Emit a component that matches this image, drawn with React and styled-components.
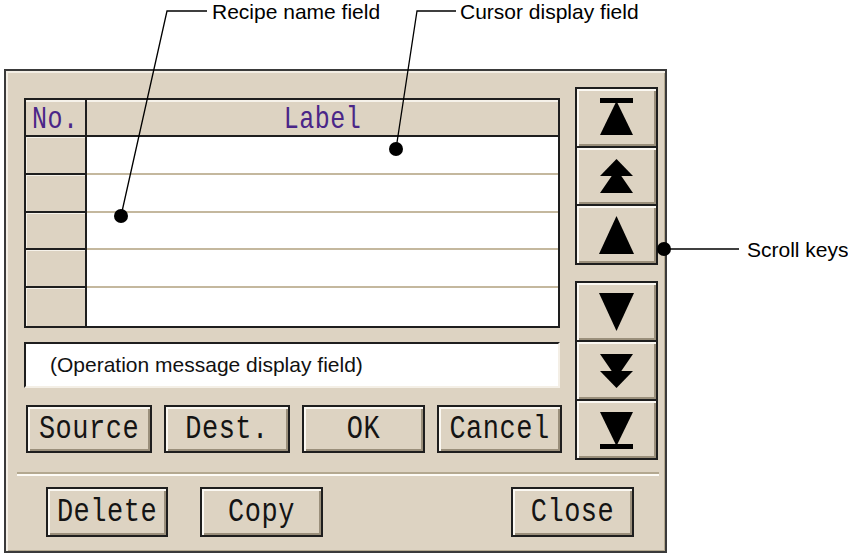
import React from 'react';
import styled, { createGlobalStyle } from 'styled-components';

//* ======================
//*     THEME VALUES
//* ======================
const BEIGE = '#ddd3c2';
const INK = '#1e1e1e';
const PIXEL_FONT = '"Liberation Mono", "DejaVu Sans Mono", monospace';

const GlobalStyle = createGlobalStyle`
  html, body {
    margin: 0;
    padding: 0;
    background: #fff;
  }
  body {
    font-family: "Liberation Sans", Arial, sans-serif;
  }
`;

//* ======================
//*     STYLED_COMPONENT
//* ======================
const Stage = styled.div`
  position: relative;
  width: 848px;
  height: 555px;
  overflow: hidden;
  box-sizing: border-box;
  padding: 69px 0 0 4px;
`;

const Leaders = styled.svg`
  position: absolute;
  left: 0;
  top: 0;
  pointer-events: none;
`;

const Callout = styled.span`
  position: absolute;
  left: ${(p) => p.$x}px;
  top: ${(p) => p.$y}px;
  font-family: "Liberation Sans", Arial, sans-serif;
  font-size: 21px;
  line-height: 24px;
  color: #000;
  white-space: nowrap;
`;

const Panel = styled.div`
  width: 663px;
  height: 484px;
  box-sizing: border-box;
  background: ${BEIGE};
  border: 2px solid #3a3a3a;
  box-shadow: inset 2px 2px 0 #f3eee4, inset -1px -1px 0 #b3a88f;
  display: flex;
  flex-direction: column;
  padding: 16px 7px 0 18px;
`;

const Main = styled.div`
  display: flex;
  gap: 15px;
`;

const LeftCol = styled.div`
  width: 536px;
  margin-top: 11px;
  display: flex;
  flex-direction: column;
`;

const Table = styled.div`
  width: 536px;
  height: 230px;
  box-sizing: border-box;
  border: 2px solid ${INK};
  background: #fff;
  display: grid;
  grid-template-columns: 61px 1fr;
  grid-template-rows: 37px repeat(5, 1fr);
`;

const HeadCell = styled.div`
  background: ${BEIGE};
  box-sizing: border-box;
  border-bottom: 2px solid ${INK};
  border-right: ${(p) => (p.$divider ? `2px solid ${INK}` : 'none')};
  box-shadow: inset 0 2px 0 #f6f2ea;
  display: flex;
  align-items: center;
  justify-content: ${(p) => (p.$center ? 'center' : 'flex-start')};
  padding-top: 5px;
  padding-left: ${(p) => (p.$center ? 0 : 6)}px;
  color: #4a2688;
  font-family: ${PIXEL_FONT};
  font-size: 25px;
`;

const NoCell = styled.div`
  background: ${BEIGE};
  box-sizing: border-box;
  border-right: 2px solid ${INK};
  border-bottom: ${(p) => (p.$last ? 'none' : `2px solid ${INK}`)};
  box-shadow: inset 1px 1px 0 #f6f2ea;
`;

const LabelCell = styled.div`
  background: #fff;
  box-sizing: border-box;
  border-bottom: ${(p) => (p.$last ? 'none' : '2px solid #c4b89e')};
`;

const Glyphs = styled.span`
  display: inline-block;
  transform: scaleY(1.22);
  letter-spacing: 0.5px;
`;

const Message = styled.div`
  margin-top: 14px;
  height: 46px;
  box-sizing: border-box;
  background: #fff;
  border-top: 2px solid ${INK};
  border-left: 2px solid ${INK};
  border-bottom: 2px solid #f4efe6;
  border-right: 2px solid #f4efe6;
  display: flex;
  align-items: center;
  padding-left: 24px;
  font-size: 21px;
  color: #111;
`;

const ButtonRow = styled.div`
  margin: 17px -2px 0 2px;
  display: flex;
  justify-content: space-between;
`;

const Key = styled.button`
  box-sizing: border-box;
  width: ${(p) => p.$w}px;
  height: ${(p) => p.$h || 48}px;
  margin: 0;
  padding: 0;
  background: ${BEIGE};
  border: 2px solid ${INK};
  box-shadow: inset 2px 2px 0 #fbf8f2, inset -2px -2px 0 #9a8f7b;
  font-family: ${PIXEL_FONT};
  font-size: 27px;
  color: #141414;
  display: flex;
  align-items: center;
  justify-content: center;
  cursor: pointer;
`;

const ScrollCol = styled.div`
  width: 83px;
  display: flex;
  flex-direction: column;
  gap: 16px;
`;

const ScrollGroup = styled.div`
  height: ${(p) => p.$h}px;
  box-sizing: border-box;
  border: 2px solid ${INK};
  display: flex;
  flex-direction: column;
`;

const ScrollKey = styled.button`
  flex: 1;
  margin: 0;
  padding: 0;
  background: ${BEIGE};
  border: none;
  border-top: ${(p) => (p.$first ? 'none' : `2px solid ${INK}`)};
  box-shadow: inset 2px 2px 0 #fbf8f2, inset -2px -2px 0 #9a8f7b;
  display: flex;
  align-items: center;
  justify-content: center;
  cursor: pointer;
`;

const Separator = styled.div`
  margin: 12px 0 0 -7px;
  width: 642px;
  height: 4px;
  box-sizing: border-box;
  border-top: 2px solid #b3a890;
  border-bottom: 2px solid #fdfbf6;
`;

const FooterRow = styled.div`
  margin-top: 11px;
  display: flex;
  gap: 32px;
  padding: 0 24px 0 22px;
`;

const Spacer = styled.div`
  flex: 1;
`;

//* ======================
//*     ICONS
//* ======================
const ScrollIcon = ({ kind, down }) => {
  const flip = down ? { transform: 'scale(1,-1) translate(0,-38)' } : {};
  return (
    <svg width="35" height="38" viewBox="0 0 35 38">
      <g {...flip} fill="#000">
        {kind === 'end' && (
          <>
            <rect x="1" y="0" width="33" height="5" />
            <polygon points="17.5,3 1,37 34,37" />
          </>
        )}
        {kind === 'page' && (
          <>
            <polygon points="17.5,2 1,19 34,19" />
            <polygon points="17.5,12 1,36 34,36" />
          </>
        )}
        {kind === 'line' && <polygon points="17.5,0 0,38 35,38" />}
      </g>
    </svg>
  );
};

const rows = [0, 1, 2, 3, 4];

const App = () => {
  //* ======================
  //*    RENDER
  //* ======================
  return (
    <Stage>
      <GlobalStyle />
      <Panel>
        <Main>
          <LeftCol>
            <Table>
              <HeadCell $divider>
                <Glyphs>No.</Glyphs>
              </HeadCell>
              <HeadCell $center>
                <Glyphs>Label</Glyphs>
              </HeadCell>
              {rows.map((r) => (
                <React.Fragment key={r}>
                  <NoCell $last={r === 4} />
                  <LabelCell $last={r === 4} />
                </React.Fragment>
              ))}
            </Table>
            <Message>(Operation message display field)</Message>
            <ButtonRow>
              <Key $w={126}>
                <Glyphs>Source</Glyphs>
              </Key>
              <Key $w={126}>
                <Glyphs>Dest.</Glyphs>
              </Key>
              <Key $w={123}>
                <Glyphs>OK</Glyphs>
              </Key>
              <Key $w={125}>
                <Glyphs>Cancel</Glyphs>
              </Key>
            </ButtonRow>
          </LeftCol>
          <ScrollCol>
            <ScrollGroup $h={178}>
              <ScrollKey $first>
                <ScrollIcon kind="end" />
              </ScrollKey>
              <ScrollKey>
                <ScrollIcon kind="page" />
              </ScrollKey>
              <ScrollKey>
                <ScrollIcon kind="line" />
              </ScrollKey>
            </ScrollGroup>
            <ScrollGroup $h={179}>
              <ScrollKey $first>
                <ScrollIcon kind="line" down />
              </ScrollKey>
              <ScrollKey>
                <ScrollIcon kind="page" down />
              </ScrollKey>
              <ScrollKey>
                <ScrollIcon kind="end" down />
              </ScrollKey>
            </ScrollGroup>
          </ScrollCol>
        </Main>
        <Separator />
        <FooterRow>
          <Key $w={122} $h={50}>
            <Glyphs>Delete</Glyphs>
          </Key>
          <Key $w={123} $h={50}>
            <Glyphs>Copy</Glyphs>
          </Key>
          <Spacer />
          <Key $w={123} $h={50}>
            <Glyphs>Close</Glyphs>
          </Key>
        </FooterRow>
      </Panel>

      <Leaders width="848" height="555" viewBox="0 0 848 555">
        <polyline points="207,11 167,11 121,216" fill="none" stroke="#000" strokeWidth="1.3" />
        <circle cx="121" cy="216" r="7" fill="#000" />
        <polyline points="456,11 417,11 396,149" fill="none" stroke="#000" strokeWidth="1.3" />
        <circle cx="396" cy="149" r="7" fill="#000" />
        <line x1="664" y1="249" x2="739" y2="249" stroke="#000" strokeWidth="1.3" />
        <circle cx="664" cy="249" r="7" fill="#000" />
      </Leaders>
      <Callout $x={212} $y={0}>Recipe name field</Callout>
      <Callout $x={460} $y={0}>Cursor display field</Callout>
      <Callout $x={747} $y={238}>Scroll keys</Callout>
    </Stage>
  );
};

export default App;
